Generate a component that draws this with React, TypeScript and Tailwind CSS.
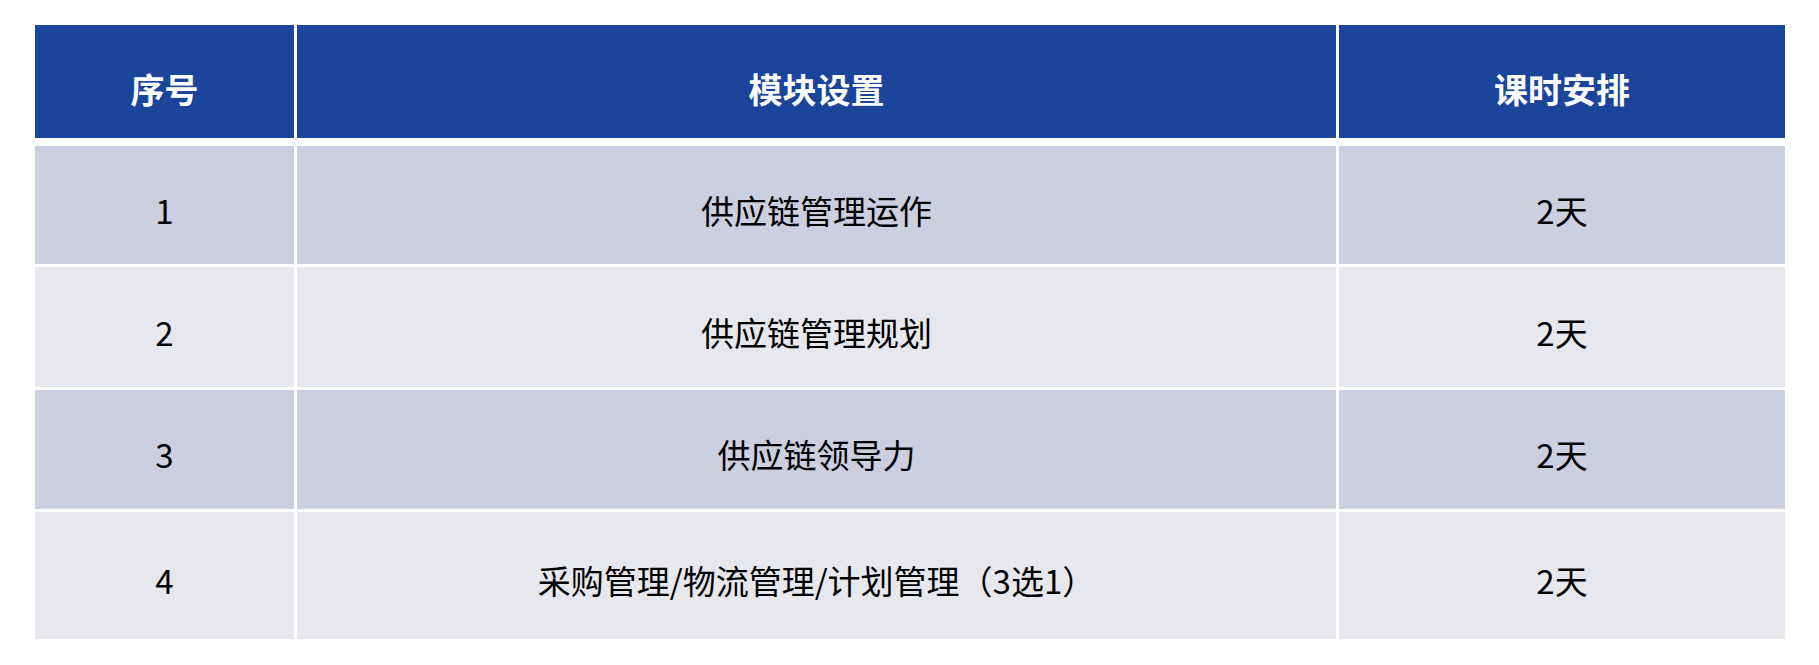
import React from 'react';

type Row = { no: string; module: string; time: string };

const rows: Row[] = [
  { no: '1', module: '供应链管理运作', time: '2天' },
  { no: '2', module: '供应链管理规划', time: '2天' },
  { no: '3', module: '供应链领导力', time: '2天' },
  { no: '4', module: '采购管理/物流管理/计划管理（3选1）', time: '2天' },
];

const rowHeights = ['h-[118px]', 'h-[120px]', 'h-[119px]', 'h-[127px]'];

export default function App() {
  return (
    <div className="w-[1819px] h-[665px] bg-white pl-[35px] pt-[25px] font-['Noto_Sans_CJK_SC','Noto_Sans',sans-serif]">
      <div className="w-[1750px] flex flex-col gap-[3px]">
        {/* Header */}
        <div className="grid grid-cols-[259px_1039px_446px] gap-x-[3px] h-[113px] mb-[5px]">
          {['序号', '模块设置', '课时安排'].map((h) => (
            <div
              key={h}
              className="bg-[#1b449b] text-white font-bold text-[34px] leading-none flex items-center justify-center pt-[14px]"
            >
              {h}
            </div>
          ))}
        </div>

        {/* Body */}
        {rows.map((r, i) => {
          const bg = i % 2 === 0 ? 'bg-[#cccfdf]' : 'bg-[#e7e8ee]';
          return (
            <div
              key={r.no}
              className={`grid grid-cols-[259px_1039px_446px] gap-x-[3px] ${rowHeights[i]}`}
            >
              <div className={`${bg} flex items-center justify-center text-[33px] leading-none text-black pt-[10px]`}>
                {r.no}
              </div>
              <div className={`${bg} flex items-center justify-center text-[33px] leading-none text-black pt-[10px]`}>
                {r.module}
              </div>
              <div className={`${bg} flex items-center justify-center text-[33px] leading-none text-black pt-[10px]`}>
                {r.time}
              </div>
            </div>
          );
        })}
      </div>
    </div>
  );
}
